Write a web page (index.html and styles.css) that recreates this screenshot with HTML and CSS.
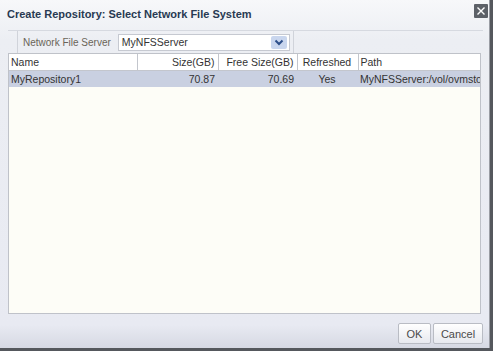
FILE: index.html
```html
<!DOCTYPE html>
<html lang="en">
  <head>
    <meta charset="UTF-8" />
    <title>Create Repository</title>
    <link rel="stylesheet" href="styles.css">
  </head>
  <body>
    <div class="dialog">
      <div class="titlebar">
        <span class="title">Create Repository: Select Network File System</span>
        <span class="close">
          <svg width="14" height="14" viewBox="0 0 14 14">
            <rect x="0" y="0" width="14" height="14" rx="1" fill="#5d6168"/>
            <path d="M3.5 3.5 L10.5 10.5 M10.5 3.5 L3.5 10.5" stroke="#fff" stroke-width="1.4"/>
          </svg>
        </span>
      </div>

      <div class="toolbar">
        <div class="tb-group">
          <label for="nfs">Network File Server</label>
          <div class="select">
            <span>MyNFSServer</span>
            <span class="drop">
              <svg width="10" height="7" viewBox="0 0 10 7">
                <path d="M1.5 1.5 L5 5 L8.5 1.5" fill="none" stroke="#2d4f8a" stroke-width="2"/>
              </svg>
            </span>
          </div>
        </div>
      </div>

      <div class="grid">
        <table>
          <colgroup>
            <col style="width:128px">
            <col style="width:81px">
            <col style="width:79px">
            <col style="width:61px">
            <col>
          </colgroup>
          <thead>
            <tr>
              <th class="left">Name</th>
              <th class="right">Size(GB)</th>
              <th class="right">Free Size(GB)</th>
              <th class="center">Refreshed</th>
              <th class="left">Path</th>
            </tr>
          </thead>
          <tbody>
            <tr class="selected">
              <td class="left">MyRepository1</td>
              <td class="right">70.87</td>
              <td class="right">70.69</td>
              <td class="center">Yes</td>
              <td class="left clip">MyNFSServer:/vol/ovmsto</td>
            </tr>
          </tbody>
        </table>
      </div>

      <div class="buttons">
        <button class="ok">OK</button>
        <button class="cancel">Cancel</button>
      </div>
    </div>
  </body>
</html>
```

FILE: styles.css
```css
html, body {
  margin: 0;
  padding: 0;
}
body {
  width: 493px;
  height: 351px;
  background-color: #55585d;
  font-family: "Liberation Sans", Arial, sans-serif;
  overflow: hidden;
}
.dialog {
  width: 490px;
  height: 348px;
  display: flex;
  flex-direction: column;
  background: linear-gradient(to bottom, #f7f8fa 0px, #eceef3 40px, #e8eaf2 325px, #d6d9e3 348px);
  border-right: 1px solid #9a9da4;
  box-sizing: border-box;
}
.titlebar {
  height: 29px;
  display: flex;
  justify-content: space-between;
  align-items: center;
  padding: 0 1px 2px 7px;
  box-sizing: border-box;
}
.title {
  font-size: 11px;
  font-weight: bold;
  color: #283a52;
}
.close {
  display: flex;
  margin-top: -5px;
}
.toolbar {
  margin: 1px 6px 0 8px;
  height: 23px;
  border-top: 1px solid #d6d9e0;
  box-sizing: border-box;
}
.tb-group {
  margin-left: 9px;
  width: 277px;
  height: 22px;
  border-left: 1px solid #d0d3da;
  border-right: 1px solid #d0d3da;
  display: flex;
  align-items: center;
  box-sizing: border-box;
}
label {
  font-size: 10px;
  color: #6a6458;
  margin-left: 5px;
  margin-right: 7px;
}
.select {
  width: 172px;
  height: 17px;
  background-color: #fff;
  border: 1px solid #c6c9d1;
  box-sizing: border-box;
  display: flex;
  align-items: center;
  justify-content: space-between;
  font-size: 10.5px;
  color: #333;
  padding-left: 3px;
}
.drop {
  width: 16px;
  height: 13px;
  margin-right: 2px;
  background-color: #c9d6ee;
  border-radius: 2px;
  display: flex;
  align-items: center;
  justify-content: center;
}
.grid {
  margin-left: 8px;
  width: 473px;
  height: 261px;
  background-color: #fdfdf7;
  border: 1px solid #bfc2c9;
  box-sizing: border-box;
  overflow: hidden;
}
table {
  width: 100%;
  border-collapse: collapse;
  table-layout: fixed;
  font-size: 10.5px;
  color: #333;
}
th {
  height: 16px;
  font-weight: normal;
  background-color: #fff;
  border-right: 1px solid #c3c6cd;
  border-bottom: 1px solid #c3c6cd;
  padding: 0 3px 0 2px;
  white-space: nowrap;
}
th:last-child {
  border-right: none;
}
td {
  height: 16px;
  padding: 0 3px 0 2px;
  white-space: nowrap;
}
.selected td {
  background-color: #c9d0e1;
  border-top: 1px solid #fdfdf7;
}
.left { text-align: left; }
.right { text-align: right; }
.center { text-align: center; }
.clip { overflow: hidden; }
.buttons {
  display: flex;
  justify-content: flex-end;
  gap: 2px;
  padding: 9px 6px 0 0;
}
button {
  height: 21px;
  font-family: "Liberation Sans", Arial, sans-serif;
  font-size: 11px;
  color: #4a4a4a;
  background: linear-gradient(to bottom, #ffffff, #e7e9ef);
  border: 1px solid #b9bcc4;
  border-radius: 2px;
  padding: 0;
}
.ok { width: 33px; }
.cancel { width: 50px; }
```
